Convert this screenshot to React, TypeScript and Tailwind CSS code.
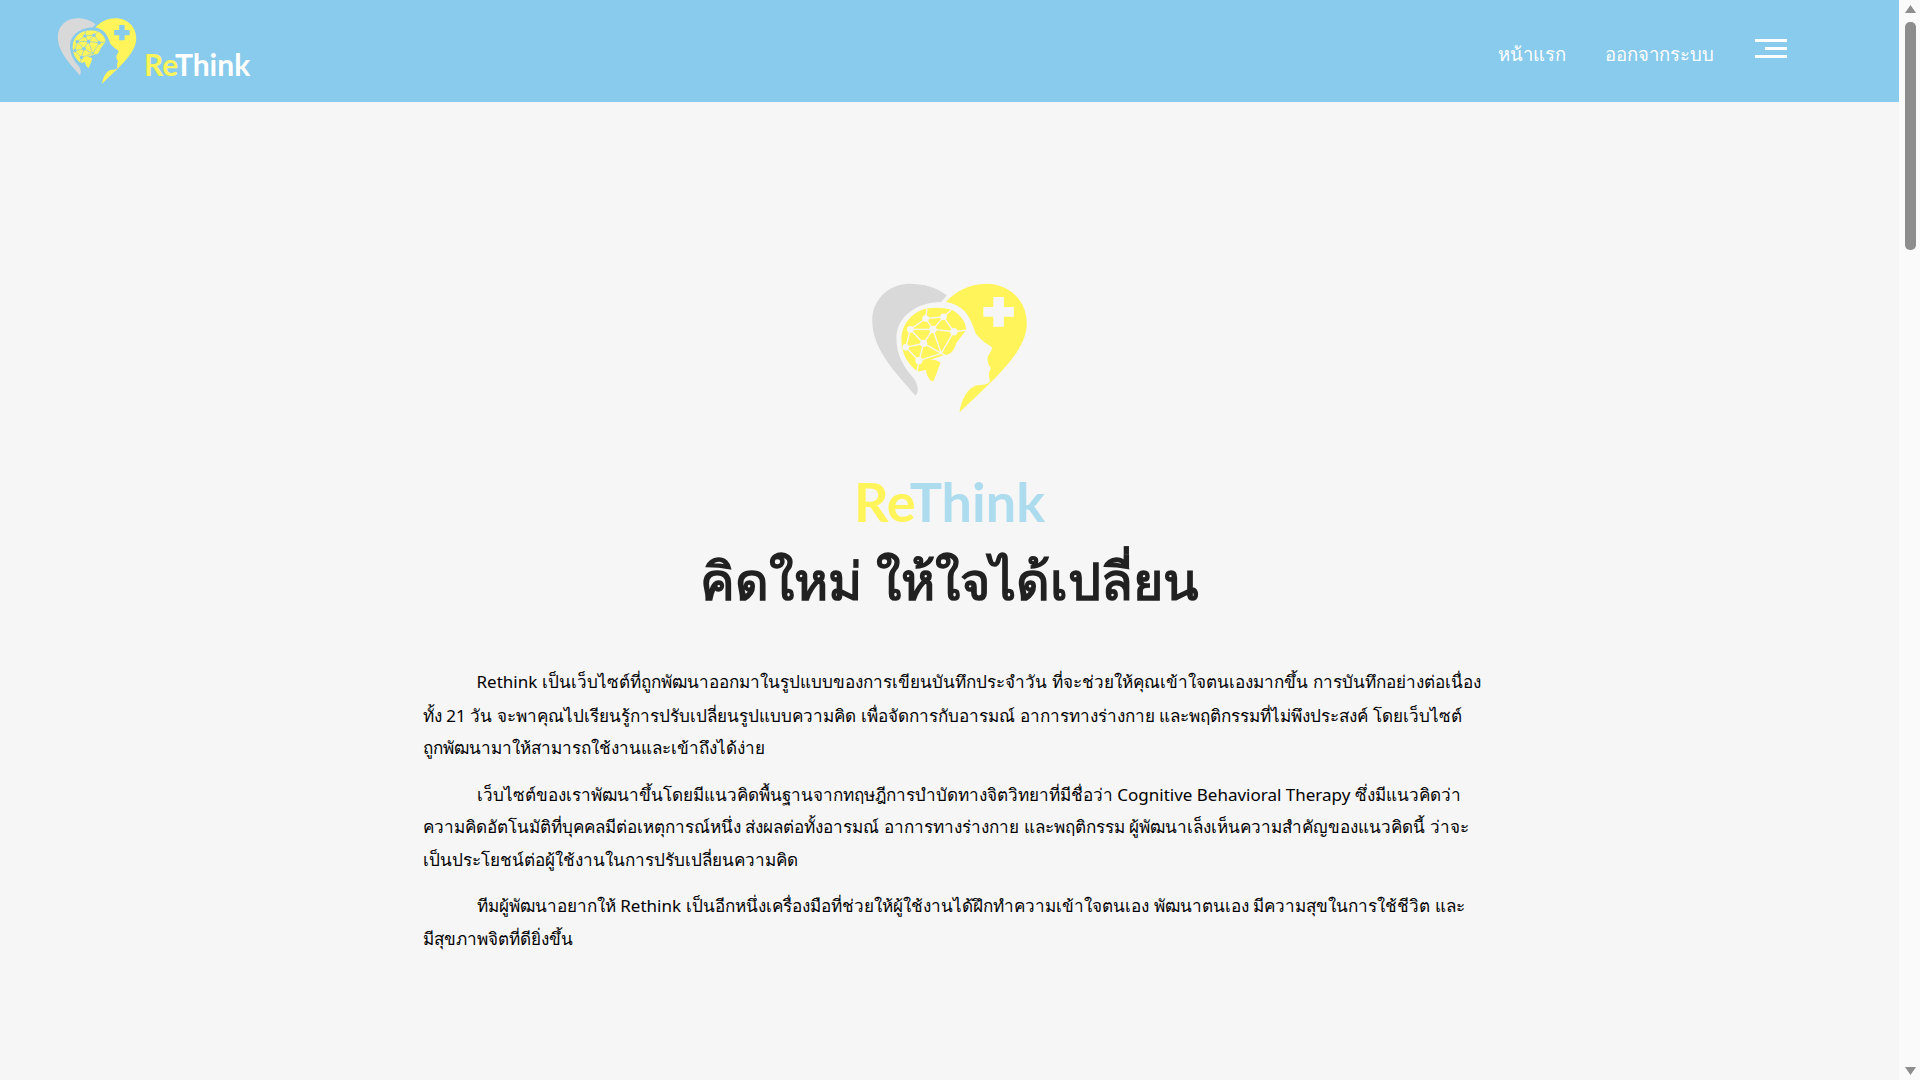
import React from 'react';

const BODY_FONT = "font-['Liberation_Sans','Noto_Sans',sans-serif]";
const LOGO_FONT = "font-['Lato','Noto_Sans',sans-serif]";

// latin words in the body copy sit a little wider than the thai around them
const Latin: React.FC<{ children: React.ReactNode }> = ({ children }) => (
  <span className="font-['Noto_Sans',sans-serif] text-[17px]">{children}</span>
);

const Logo: React.FC<{ className: string; gapClass: string }> = ({ className, gapClass }) => (
  <svg viewBox="95 68 470 392" className={className}>
    <path
      fill="#d9d9d9"
      d="M322 105C290 80 250 70 210 70C145 70 97 120 97 180C97 270 170 340 228 408C238 395 236 375 222 355C190 320 168 280 170 230C172 170 230 125 305 125Z"
    />
    <path
      fill="#fff45a"
      d="M320 125C345 95 390 70 440 70C510 70 563 120 563 190C563 270 480 345 360 458C365 420 385 385 410 377C430 375 445 375 452 365C450 350 445 342 455 325C446 315 443 300 446 290C450 280 460 270 458 262C440 250 425 240 410 222C400 195 390 165 370 148C355 135 338 128 320 125Z"
    />
    <path
      className={`${gapClass} fill-current`}
      d="M462 110H494V140H524V170H494V200H462V170H432V140H462Z"
    />
    <path
      fill="#fff45a"
      d="M185 240C185 190 220 155 260 145C290 140 320 142 340 150C365 165 382 190 380 210C370 225 358 238 350 250C345 270 335 285 315 285L270 300C285 298 305 305 302 312C295 325 290 350 280 365C268 362 262 345 258 330L235 335C210 320 185 285 185 240Z"
    />
    <g className={`${gapClass} stroke-current fill-current`} strokeWidth="4">
      <path
        fill="none"
        d="M258 175L312 170L343 215L280 208L258 175M312 170L280 208M258 175L212 208L280 208L252 250L212 208L198 262L252 250L238 302L198 262M280 208L305 280L252 250M343 215L305 280L238 302M343 215L380 210M258 175L262 145M312 170L335 150M238 302L232 335M305 280L315 285"
      />
      <circle cx="258" cy="175" r="8" />
      <circle cx="312" cy="170" r="8" />
      <circle cx="212" cy="208" r="8" />
      <circle cx="280" cy="208" r="9" />
      <circle cx="343" cy="215" r="9" />
      <circle cx="252" cy="250" r="9" />
      <circle cx="198" cy="262" r="8" />
      <circle cx="238" cy="302" r="9" />
    </g>
  </svg>
);

const Scrollbar: React.FC = () => (
  <aside className="w-[21px] shrink-0 bg-[#fafafa] flex flex-col items-center pl-px">
    <svg viewBox="0 0 11 8" className="w-[11px] h-2 mt-[5px] fill-[#8d8d8d]">
      <path d="M5.5 0L11 8H0Z" />
    </svg>
    <div className="w-[11px] h-[228px] mt-[9px] rounded-[5px] bg-[#8d8d8d]"></div>
    <svg viewBox="0 0 11 8" className="w-[11px] h-2 mt-auto mb-[5px] fill-[#8d8d8d]">
      <path d="M0 0H11L5.5 8Z" />
    </svg>
  </aside>
);

const App: React.FC = () => {
  return (
    <div className={`h-screen overflow-hidden flex bg-[#f6f6f6] ${BODY_FONT}`}>
      <div className="flex-1 min-w-0 flex flex-col">
        <header className="h-[102px] shrink-0 bg-[#89cbec] flex items-center justify-between pl-[57px] pr-[112px]">
          <div className="flex items-end gap-[7px]">
            <Logo className="w-[80px] h-[66px]" gapClass="text-[#89cbec]" />
            <span className={`text-[30px] leading-[30px] font-bold mb-[5px] ${LOGO_FONT}`}>
              <span className="text-[#fff45a]">Re</span>
              <span className="text-white">Think</span>
            </span>
          </div>
          <nav className="flex items-center text-white text-[18.5px]">
            <a className="mt-[7px]">หน้าแรก</a>
            <a className="ml-[39px] mt-[7px]">ออกจากระบบ</a>
            <div className="ml-[41px] w-8 h-[19px] flex flex-col justify-between items-end -mt-[5px]">
              <span className="block w-8 h-[3px] bg-white"></span>
              <span className="block w-[22px] h-[3px] bg-white"></span>
              <span className="block w-8 h-[3px] bg-white"></span>
            </div>
          </nav>
        </header>

        <main className="flex-1 flex flex-col items-center pt-[181px]">
          <Logo className="w-[157px] h-[130px]" gapClass="text-[#f6f6f6]" />
          <h1 className={`mt-[54px] text-[54px] leading-[70px] font-bold ${LOGO_FONT}`}>
            <span className="text-[#fff45a]">Re</span>
            <span className="text-[#aedcef]">Think</span>
          </h1>
          <h2 className="mt-[10px] text-[52px] leading-[70px] font-bold text-[#212121]">คิดใหม่ ให้ใจได้เปลี่ยน</h2>

          <div className="w-[1054px] mt-[49px] text-[17.1px] leading-[32.5px] text-black">
            <p className="mb-[13px]">
              <span className="pl-[54px] block whitespace-nowrap"><Latin>Rethink</Latin> เป็นเว็บไซต์ที่ถูกพัฒนาออกมาในรูปแบบของการเขียนบันทึกประจำวัน ที่จะช่วยให้คุณเข้าใจตนเองมากขึ้น การบันทึกอย่างต่อเนื่อง</span>
              <span className="block whitespace-nowrap">ทั้ง <Latin>21</Latin> วัน จะพาคุณไปเรียนรู้การปรับเปลี่ยนรูปแบบความคิด เพื่อจัดการกับอารมณ์ อาการทางร่างกาย และพฤติกรรมที่ไม่พึงประสงค์ โดยเว็บไซต์</span>
              <span className="block whitespace-nowrap">ถูกพัฒนามาให้สามารถใช้งานและเข้าถึงได้ง่าย</span>
            </p>
            <p className="mb-[13px]">
              <span className="pl-[54px] block whitespace-nowrap">เว็บไซต์ของเราพัฒนาขึ้นโดยมีแนวคิดพื้นฐานจากทฤษฎีการบำบัดทางจิตวิทยาที่มีชื่อว่า <Latin>Cognitive Behavioral Therapy</Latin> ซึ่งมีแนวคิดว่า</span>
              <span className="block whitespace-nowrap">ความคิดอัตโนมัติที่บุคคลมีต่อเหตุการณ์หนึ่ง ส่งผลต่อทั้งอารมณ์ อาการทางร่างกาย และพฤติกรรม ผู้พัฒนาเล็งเห็นความสำคัญของแนวคิดนี้ ว่าจะ</span>
              <span className="block whitespace-nowrap">เป็นประโยชน์ต่อผู้ใช้งานในการปรับเปลี่ยนความคิด</span>
            </p>
            <p>
              <span className="pl-[54px] block whitespace-nowrap">ทีมผู้พัฒนาอยากให้ <Latin>Rethink</Latin> เป็นอีกหนึ่งเครื่องมือที่ช่วยให้ผู้ใช้งานได้ฝึกทำความเข้าใจตนเอง พัฒนาตนเอง มีความสุขในการใช้ชีวิต และ</span>
              <span className="block whitespace-nowrap">มีสุขภาพจิตที่ดียิ่งขึ้น</span>
            </p>
          </div>
        </main>
      </div>
      <Scrollbar />
    </div>
  );
};

export default App;
